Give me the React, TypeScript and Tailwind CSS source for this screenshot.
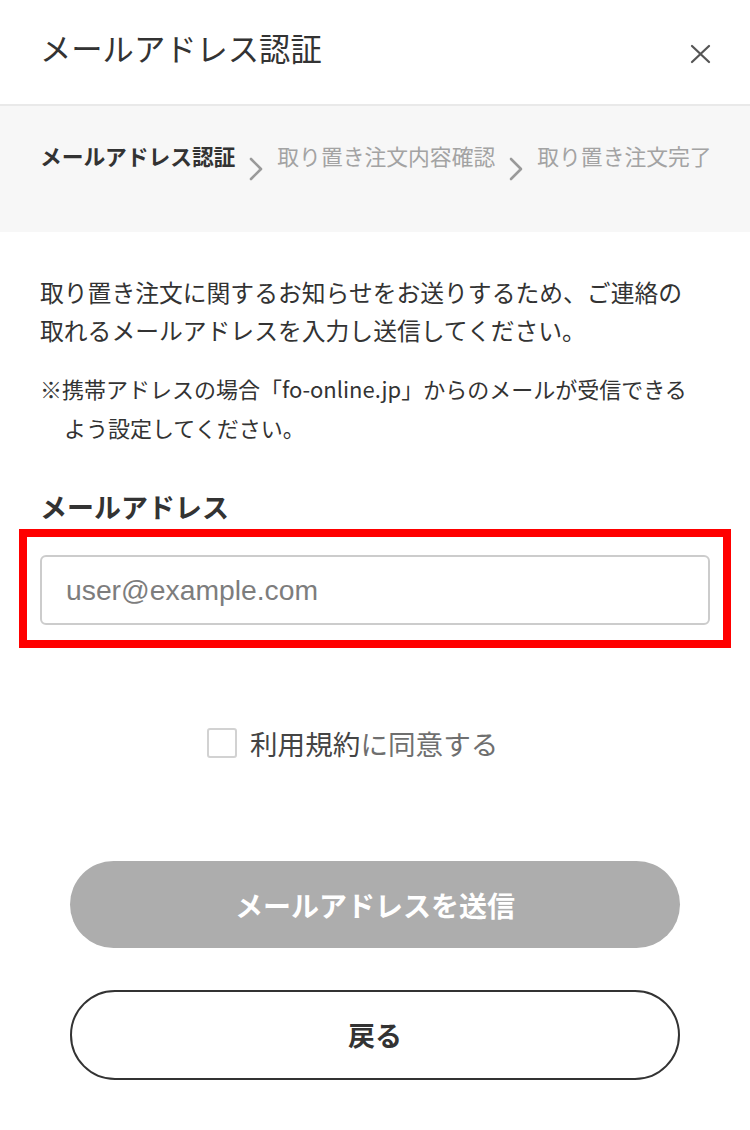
function Chevron() {
  return (
    <svg width="14" height="24" viewBox="0 0 14 24" className="shrink-0 mt-[18px] mx-[14px]">
      <polyline points="2,2 12,12 2,22" fill="none" stroke="#9a9a9a" strokeWidth="2.6" strokeLinecap="round" strokeLinejoin="round" />
    </svg>
  );
}

export default function App() {
  return (
    <div className="w-[750px] min-h-[1130px] bg-white text-[#333] font-['Noto_Sans_CJK_JP','Noto_Sans',sans-serif]">
      {/* header */}
      <header className="h-[106px] flex items-start justify-between pl-10 pr-[39px] border-b-2 border-[#e9e9e9]">
        <h1 className="mt-[27px] text-[31.3px] leading-[42px] font-normal text-[#333]">メールアドレス認証</h1>
        <button className="mt-[44px] p-0" aria-label="閉じる">
          <svg width="21" height="20" viewBox="0 0 21 20">
            <line x1="2" y1="2" x2="19" y2="18" stroke="#555" strokeWidth="2.2" strokeLinecap="round" />
            <line x1="19" y1="2" x2="2" y2="18" stroke="#555" strokeWidth="2.2" strokeLinecap="round" />
          </svg>
        </button>
      </header>

      {/* steps */}
      <nav className="h-[126px] bg-[#f7f7f7] flex items-start pl-10 pt-[33px] text-[21.8px] leading-[33px] whitespace-nowrap">
        <span className="font-bold text-[#333] tracking-[-0.1px]">メールアドレス認証</span>
        <Chevron />
        <span className="text-[#a3a3a3]">取り置き注文内容確認</span>
        <Chevron />
        <span className="text-[#a3a3a3]">取り置き注文完了</span>
      </nav>

      <main className="px-10">
        <p className="mt-[41px] text-[23.8px] leading-[38px] text-[#333]">
          取り置き注文に関するお知らせをお送りするため、ご連絡の
          <br />
          取れるメールアドレスを入力し送信してください。
        </p>
        <p className="mt-[20px] pl-[24px] -indent-[24px] text-[22px] leading-[39px] text-[#333] whitespace-nowrap">
          ※携帯アドレスの場合「fo-online.jp」からのメールが受信できる
          <br />
          よう設定してください。
        </p>

        <label htmlFor="email" className="block mt-[40px] text-[27px] leading-[40px] font-bold text-[#333]">
          メールアドレス
        </label>

        <div className="mt-[2px] -mx-[21px] border-[8px] border-[#ff0000] px-[13px] pt-[18px] pb-[15px]">
          <input
            id="email"
            type="email"
            placeholder="user@example.com"
            className="w-full h-[70px] border-2 border-[#cccccc] rounded-[6px] px-[24px] text-[28.3px] font-['Liberation_Sans',Arial,sans-serif] text-[#333] placeholder:text-[#7d7d7d] outline-none"
          />
        </div>

        <label className="mt-[80px] pl-[167px] flex items-center gap-[13px] cursor-pointer">
          <span className="w-[30px] h-[30px] border-2 border-[#d2d2d2] rounded-[3px] bg-white shrink-0" />
          <span className="text-[27.6px] leading-[30px]">
            <span className="text-[#444]">利用規約</span>
            <span className="text-[#6f6f6f]">に同意する</span>
          </span>
        </label>

        <div className="mx-[30px] mt-[103px] flex flex-col gap-[42px]">
          <button className="h-[87px] rounded-full bg-[#adadad] text-white text-[28px] font-bold">
            メールアドレスを送信
          </button>
          <button className="h-[90px] rounded-full border-2 border-[#333] bg-white text-[#333] text-[27px] font-bold">
            戻る
          </button>
        </div>
      </main>
    </div>
  );
}
